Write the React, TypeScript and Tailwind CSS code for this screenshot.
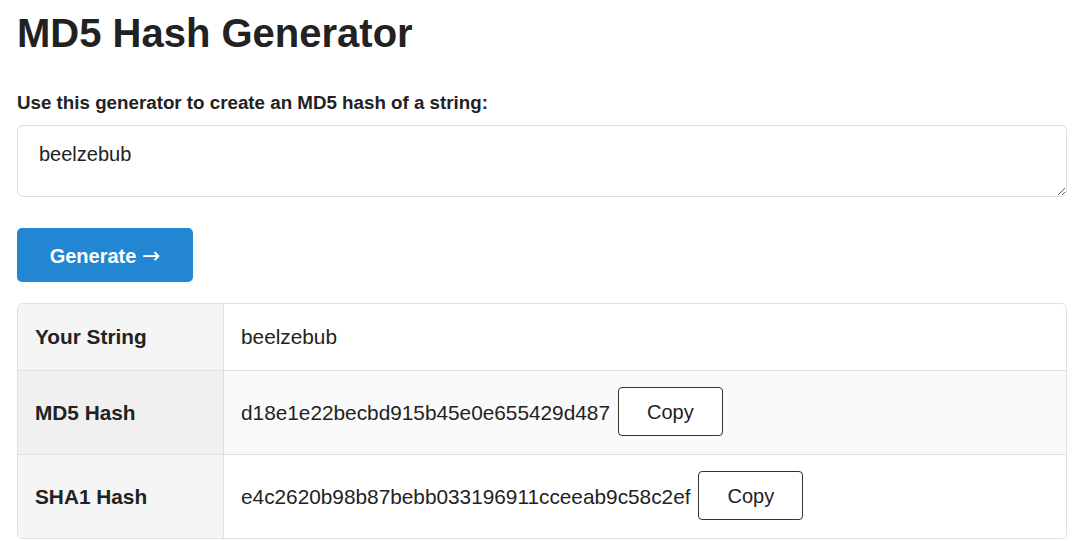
const rows = [
  { label: 'Your String', value: 'beelzebub', copy: false },
  { label: 'MD5 Hash', value: 'd18e1e22becbd915b45e0e655429d487', copy: true },
  { label: 'SHA1 Hash', value: 'e4c2620b98b87bebb033196911cceeab9c58c2ef', copy: true },
]

export default function App() {
  return (
    <div className="min-h-[541px] bg-white font-['Liberation_Sans',Arial,sans-serif] text-[#222]">
      <div className="ml-[17px] w-[1050px] pt-[9px]">
        <h1 className="text-[40px] font-bold leading-[48px]">MD5 Hash Generator</h1>

        <label className="mt-[34px] block text-[18.75px] font-bold leading-[24px]">
          Use this generator to create an MD5 hash of a string:
        </label>
        <textarea
          defaultValue="beelzebub"
          className="mt-[10px] block h-[72px] w-full resize-y rounded-[6px] border border-[#ddd] px-[21px] py-[16px] text-[20px] leading-[24px] text-[#222] outline-none"
        />

        <button className="mt-[31px] h-[54px] w-[176px] rounded-[5px] bg-[#2386d3] text-[20px] font-bold text-white">
          Generate <span className="font-['DejaVu_Sans',sans-serif] text-[22px] font-normal">→</span>
        </button>

        <div className="mt-[21px] overflow-hidden rounded-[6px] border border-[#e0e0e0]">
          {rows.map((r, i) => (
            <div
              key={r.label}
              className={`grid grid-cols-[206px_1fr] ${i > 0 ? 'h-[84px] border-t border-[#e0e0e0]' : 'h-[66px]'}`}
            >
              <div
                className={`flex items-center border-r border-[#e0e0e0] px-[17px] text-[20.8px] font-bold ${i === 1 ? 'bg-[#f0f0f0]' : 'bg-[#f5f5f5]'}`}
              >
                {r.label}
              </div>
              <div
                className={`flex items-center gap-[8px] px-[17px] text-[20.8px] ${i === 1 ? 'bg-[#fafafa]' : 'bg-white'}`}
              >
                <span>{r.value}</span>
                {r.copy && (
                  <button className="mb-[2px] h-[49px] rounded-[4px] border border-[#333] bg-white px-[28px] text-[20px] text-[#222]">
                    Copy
                  </button>
                )}
              </div>
            </div>
          ))}
        </div>
      </div>
    </div>
  )
}
